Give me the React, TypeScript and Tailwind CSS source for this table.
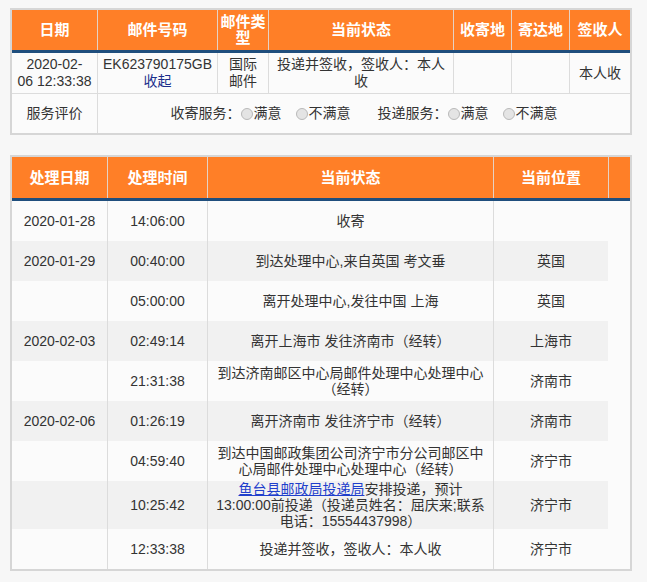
import React from "react";

const Radio = () => (
  <span className="inline-block w-[12px] h-[12px] rounded-full border border-[#b9b9b9] bg-[#e4e4e4] align-[-1px] mr-[1px]" />
);

type Row = {
  date: string;
  time: string;
  status: React.ReactNode;
  loc: string;
  h?: string;
};

const rows: Row[] = [
  { date: "2020-01-28", time: "14:06:00", status: "收寄", loc: "" },
  { date: "2020-01-29", time: "00:40:00", status: "到达处理中心,来自英国 考文垂", loc: "英国" },
  { date: "", time: "05:00:00", status: "离开处理中心,发往中国 上海", loc: "英国" },
  { date: "2020-02-03", time: "02:49:14", status: "离开上海市 发往济南市（经转）", loc: "上海市" },
  {
    date: "",
    time: "21:31:38",
    status: (
      <>
        到达济南邮区中心局邮件处理中心处理中心
        <br />
        （经转）
      </>
    ),
    loc: "济南市",
  },
  { date: "2020-02-06", time: "01:26:19", status: "离开济南市 发往济宁市（经转）", loc: "济南市" },
  {
    date: "",
    time: "04:59:40",
    status: (
      <>
        到达中国邮政集团公司济宁市分公司邮区中
        <br />
        心局邮件处理中心处理中心（经转）
      </>
    ),
    loc: "济宁市",
  },
  {
    date: "",
    time: "10:25:42",
    status: (
      <>
        <a className="text-[#1f3fcc] underline" href="#">
          鱼台县邮政局投递局
        </a>
        安排投递，预计
        <br />
        13:00:00前投递（投递员姓名：屈庆来;联系
        <br />
        电话：15554437998）
      </>
    ),
    loc: "济宁市",
    h: "h-[48px]",
  },
  { date: "", time: "12:33:38", status: "投递并签收，签收人：本人收", loc: "济宁市" },
];

const cell = "flex items-center justify-center text-center shrink-0";
const hcell = `${cell} text-white font-bold text-[15px] leading-[16px]`;
const hsep = "border-l border-[#e6d2c4]";
const bsep = "border-l border-[#dcdcdc]";

export default function App() {
  const font = "font-['Liberation_Sans','Noto_Sans_CJK_SC',sans-serif]";
  return (
    <div className={`min-h-screen bg-[#f7f7f7] pt-[8px] pl-[10px] text-[14px] text-[#333] ${font}`}>
      {/* Top table */}
      <div className="w-[622px] border-2 border-[#d6d6d6] bg-[#fbfbfb]">
        <div className="flex h-[43px] bg-[#ff7f27] border-b-[3px] border-[#1f4e7d]">
          <div className={`${hcell} w-[85px]`}>日期</div>
          <div className={`${hcell} ${hsep} w-[120px]`}>邮件号码</div>
          <div className={`${hcell} ${hsep} w-[51px]`}>
            邮件类
            <br />型
          </div>
          <div className={`${hcell} ${hsep} w-[185px]`}>当前状态</div>
          <div className={`${hcell} ${hsep} w-[58px]`}>收寄地</div>
          <div className={`${hcell} ${hsep} w-[58px]`}>寄达地</div>
          <div className={`${hcell} ${hsep} w-[61px]`}>签收人</div>
        </div>
        <div className="flex h-[41px] border-b border-[#dcdcdc] leading-[17px]">
          <div className={`${cell} w-[85px]`}>
            2020-02-
            <br />
            06 12:33:38
          </div>
          <div className={`${cell} ${bsep} w-[120px] flex-col`}>
            <span>EK623790175GB</span>
            <a href="#" className="text-[#1c2f8c]">
              收起
            </a>
          </div>
          <div className={`${cell} ${bsep} w-[51px]`}>
            国际
            <br />
            邮件
          </div>
          <div className={`${cell} ${bsep} w-[185px]`}>
            投递并签收，签收人：本人
            <br />收
          </div>
          <div className={`${cell} ${bsep} w-[58px]`}></div>
          <div className={`${cell} ${bsep} w-[58px]`}></div>
          <div className={`${cell} ${bsep} w-[61px]`}>本人收</div>
        </div>
        <div className="flex h-[39px]">
          <div className={`${cell} w-[85px]`}>服务评价</div>
          <div className={`${cell} ${bsep} w-[533px] whitespace-nowrap`}>
            <span>收寄服务：</span>
            <Radio />
            <span>满意</span>
            <span className="inline-block w-[14px]" />
            <Radio />
            <span>不满意</span>
            <span className="inline-block w-[27px]" />
            <span>投递服务：</span>
            <Radio />
            <span>满意</span>
            <span className="inline-block w-[14px]" />
            <Radio />
            <span>不满意</span>
          </div>
        </div>
      </div>

      {/* Bottom table */}
      <div className="mt-[20px] w-[622px] border-2 border-[#d6d6d6] bg-[#fbfbfb]">
        <div className="flex h-[44px] bg-[#ff7f27] border-b-[3px] border-[#1f4e7d]">
          <div className={`${hcell} w-[95px]`}>处理日期</div>
          <div className={`${hcell} ${hsep} w-[100px]`}>处理时间</div>
          <div className={`${hcell} ${hsep} w-[286px]`}>当前状态</div>
          <div className={`${hcell} ${hsep} w-[115px]`}>当前位置</div>
          <div className={`${hcell} ${hsep} w-[22px]`}></div>
        </div>
        <div className="w-[596px] leading-[16px]">
          {rows.map((r, i) => (
            <div
              key={i}
              className={`flex ${r.h ?? "h-[40px]"} ${i % 2 === 1 ? "bg-[#f1f1f1]" : "bg-[#fbfbfb]"}`}
            >
              <div className={`${cell} w-[95px]`}>{r.date}</div>
              <div className={`${cell} ${bsep} w-[100px]`}>{r.time}</div>
              <div className={`${cell} ${bsep} w-[286px] whitespace-nowrap`}>
                <div>{r.status}</div>
              </div>
              <div className={`${cell} ${bsep} w-[115px]`}>{r.loc}</div>
            </div>
          ))}
        </div>
      </div>
    </div>
  );
}
